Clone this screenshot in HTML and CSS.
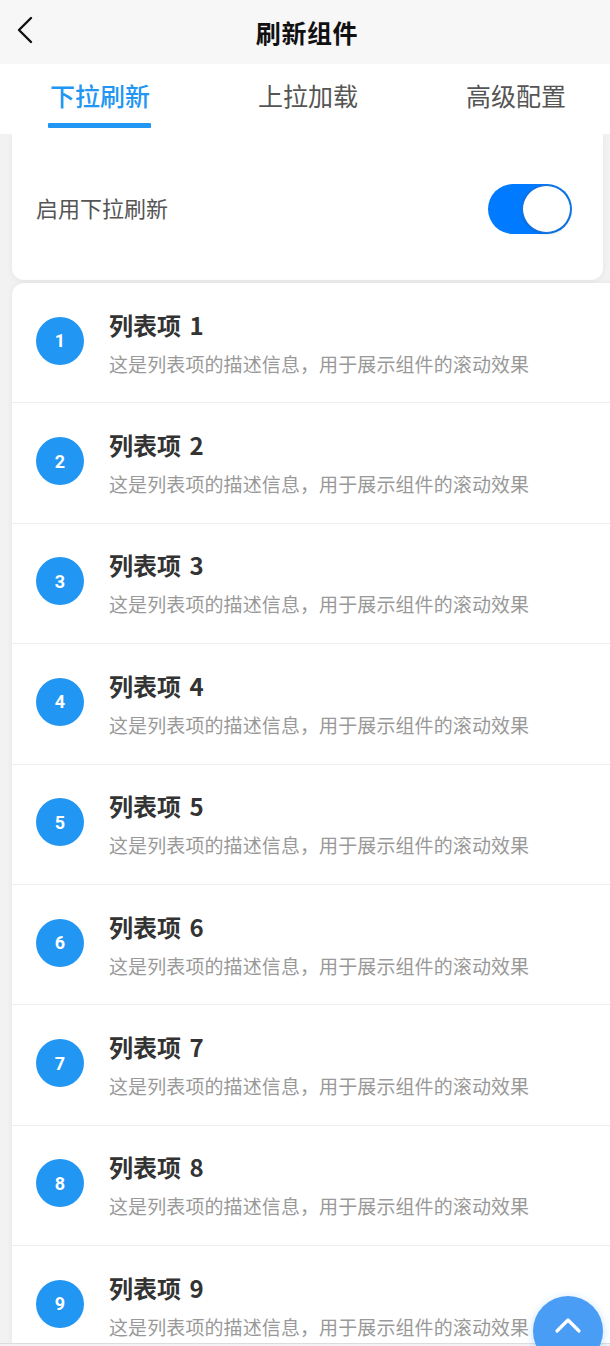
FILE: index.html
```html
<!DOCTYPE html>
<html lang="zh-CN">
<head>
<meta charset="utf-8">
<title>刷新组件</title>
<link rel="stylesheet" href="styles.css">
</head>
<body>
<div class="app">
  <header class="navbar">
    <span class="back">
      <svg width="18" height="28" viewBox="0 0 18 28"><path d="M15 2 L3 14 L15 26" fill="none" stroke="#111" stroke-width="2.4" stroke-linecap="round" stroke-linejoin="round"/></svg>
    </span>
    <h1 class="title">刷新组件</h1>
  </header>
  <nav class="tabs">
    <div class="tab active">下拉刷新<span class="underline"></span></div>
    <div class="tab">上拉加载</div>
    <div class="tab">高级配置</div>
  </nav>
  <main class="content">
    <section class="settings">
      <span class="setting-label">启用下拉刷新</span>
      <span class="switch"><span class="knob"></span></span>
    </section>
    <ul class="list">
      <li class="item"><span class="num">1</span><div class="text"><div class="item-title">列表项 1</div><div class="item-desc">这是列表项的描述信息，用于展示组件的滚动效果</div></div></li>
      <li class="item"><span class="num">2</span><div class="text"><div class="item-title">列表项 2</div><div class="item-desc">这是列表项的描述信息，用于展示组件的滚动效果</div></div></li>
      <li class="item"><span class="num">3</span><div class="text"><div class="item-title">列表项 3</div><div class="item-desc">这是列表项的描述信息，用于展示组件的滚动效果</div></div></li>
      <li class="item"><span class="num">4</span><div class="text"><div class="item-title">列表项 4</div><div class="item-desc">这是列表项的描述信息，用于展示组件的滚动效果</div></div></li>
      <li class="item"><span class="num">5</span><div class="text"><div class="item-title">列表项 5</div><div class="item-desc">这是列表项的描述信息，用于展示组件的滚动效果</div></div></li>
      <li class="item"><span class="num">6</span><div class="text"><div class="item-title">列表项 6</div><div class="item-desc">这是列表项的描述信息，用于展示组件的滚动效果</div></div></li>
      <li class="item"><span class="num">7</span><div class="text"><div class="item-title">列表项 7</div><div class="item-desc">这是列表项的描述信息，用于展示组件的滚动效果</div></div></li>
      <li class="item"><span class="num">8</span><div class="text"><div class="item-title">列表项 8</div><div class="item-desc">这是列表项的描述信息，用于展示组件的滚动效果</div></div></li>
      <li class="item"><span class="num">9</span><div class="text"><div class="item-title">列表项 9</div><div class="item-desc">这是列表项的描述信息，用于展示组件的滚动效果</div></div></li>
    </ul>
  </main>
  <button class="fab" aria-label="回到顶部">
    <svg width="28" height="18" viewBox="0 0 28 18"><path d="M3 15 L14 4 L25 15" fill="none" stroke="#fff" stroke-width="3.2" stroke-linecap="round" stroke-linejoin="round"/></svg>
  </button>
</div>
</body>
</html>
```

FILE: styles.css
```css
* { box-sizing: border-box; }
html, body { margin: 0; padding: 0; }
body {
  font-family: "Noto Sans CJK SC", "Noto Sans", "Liberation Sans", sans-serif;
  background: #f2f2f2;
  width: 610px;
  height: 1346px;
  overflow: hidden;
}
.app {
  display: flex;
  flex-direction: column;
  height: 1346px;
}
.navbar {
  height: 64px;
  background: #f7f7f7;
  display: flex;
  align-items: center;
  justify-content: center;
  position: relative;
  flex: none;
}
.back {
  position: absolute;
  left: 16px;
  top: 16px;
  display: flex;
}
.title {
  margin: 0 0 0 4px;
  font-size: 25px;
  font-weight: 700;
  color: #111;
  letter-spacing: 0.6px;
}
.tabs {
  height: 70px;
  background: #fff;
  display: grid;
  grid-template-columns: 200px 200px 200px;
  column-gap: 8px;
  flex: none;
  position: relative;
  z-index: 2;
}
.tab {
  display: flex;
  align-items: center;
  justify-content: center;
  padding-bottom: 8px;
  font-size: 25px;
  color: #555;
  position: relative;
}
.tab.active { color: #2196f3; font-weight: 500; }
.underline {
  position: absolute;
  left: 50%;
  bottom: 6px;
  width: 103px;
  height: 5px;
  margin-left: -52px;
  background: #2196f3;
  border-radius: 1px;
}
.content {
  flex: 1;
  overflow: hidden;
  border-bottom: 1px solid #dcdcdc;
  margin-bottom: 2px;
}
.settings {
  margin: 0 7px 0 12px;
  height: 146px;
  background: #fff;
  border-radius: 0 0 12px 12px;
  box-shadow: 0 1px 6px rgba(0,0,0,0.06);
  display: flex;
  align-items: center;
  justify-content: space-between;
  padding: 0 31px 0 24px;
}
.setting-label {
  font-size: 22px;
  color: #555;
}
.switch {
  width: 84px;
  height: 50px;
  border-radius: 25px;
  background: #007aff;
  display: flex;
  align-items: center;
  justify-content: flex-end;
  padding: 1px;
  margin-top: 3px;
}
.knob {
  width: 49px;
  height: 48px;
  border-radius: 50%;
  background: #fff;
  border: 1.5px solid #1a6fd6;
  box-shadow: 0 1px 3px rgba(0,0,0,0.15);
}
.list {
  list-style: none;
  margin: 3px -20px 0 12px;
  padding: 0;
  background: #fff;
  border-radius: 12px 0 0 0;
  box-shadow: 0 0 6px rgba(0,0,0,0.06);
}
.item {
  height: 120.4px;
  border-bottom: 1px solid #eeeeee;
  display: flex;
  align-items: center;
  padding-left: 24px;
}
.num {
  width: 48px;
  height: 48px;
  border-radius: 50%;
  background: #2196f3;
  color: #fff;
  font-family: "Roboto", "Liberation Sans", sans-serif;
  font-weight: 700;
  font-size: 18px;
  display: flex;
  align-items: center;
  justify-content: center;
  flex: none;
  margin-top: -4px;
}
.text {
  margin-left: 25px;
  display: flex;
  flex-direction: column;
  gap: 10px;
}
.item-title {
  font-size: 24px;
  font-weight: 700;
  color: #333;
  line-height: 32px;
  word-spacing: 3px;
}
.item-desc {
  font-size: 19px;
  color: #999;
  line-height: 26px;
  letter-spacing: 0.1px;
}
.fab {
  position: fixed;
  right: 7px;
  bottom: -20px;
  width: 70px;
  height: 70px;
  border-radius: 50%;
  border: none;
  background: #4a9df5;
  display: flex;
  align-items: flex-start;
  justify-content: center;
  padding-top: 20px;
  box-shadow: 0 2px 8px rgba(33,150,243,0.3);
}
```
